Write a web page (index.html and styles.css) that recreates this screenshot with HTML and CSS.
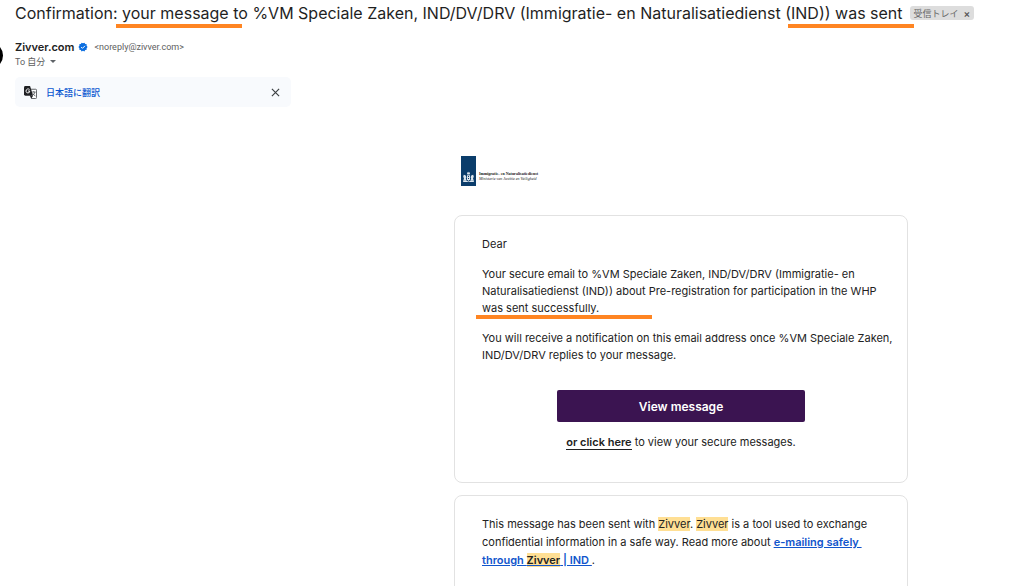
FILE: index.html
```html
<!DOCTYPE html>
<html lang="en">
<head>
    <meta charset="UTF-8">
    <meta name="viewport" content="width=device-width, initial-scale=1.0">
    <title>Confirmation: your message was sent</title>
    <link rel="stylesheet" href="styles.css">
</head>
<body>

    <header class="mail-header">
        <div class="subject">
            <h1>Confirmation<span class="mark mark-start">: your message</span> to %VM Speciale Zaken, IND/DV/DRV (Immigratie- en Naturalisatiedienst <span class="mark mark-end">(IND)) was sent</span></h1>
            <span class="label">受信トレイ <button class="label-close" type="button" aria-label="Remove label">×</button></span>
        </div>

        <div class="sender">
            <span class="avatar"></span>
            <div class="from">
                <strong>Zivver.com</strong>
                <svg class="verified" viewBox="0 0 24 24" aria-hidden="true">
                    <path fill="#0b6ee0" d="M23 12l-2.4-2.8.3-3.7-3.6-.8-1.9-3.2L12 3 8.600 1.500 6.700 4.700 3.100 5.500l.3 3.700L1 12l2.400 2.800-.3 3.700 3.600.8 1.900 3.200L12 21l3.400 1.500 1.900-3.200 3.600-.8-.3-3.700z"/>
                    <path fill="none" stroke="#fff" stroke-width="2.400" d="M7.500 12l3.200 3.200 6-6"/>
                </svg>
                <span class="address">&lt;noreply@zivver.com&gt;</span>
            </div>
            <div class="to">
                To 自分
                <button class="details" type="button" aria-label="Show details">
                    <svg viewBox="0 0 8 4"><path fill="#5f6368" d="M0 0h8L4 4z"/></svg>
                </button>
            </div>
        </div>

        <div class="translate">
            <svg class="translate-icon" viewBox="0 0 14 14" aria-hidden="true">
                <path fill="#fff" stroke="#55585c" d="M5 3.500h7.500q1 0 1 1v8q0 1-1 1H8z"/>
                <path fill="#202124" d="M1.500 0h5l3.300 10.500H1.500Q0 10.500 0 9V1.500Q0 0 1.500 0z"/>
                <path fill="#202124" d="M6.500 10.500h3.300L8 13.500z"/>
                <path fill="none" stroke="#fff" d="M6 3.700Q4.800 2.800 3.500 3.300 2 4 2.200 5.700 2.500 7.500 4.200 7.500 6.300 7.400 6.200 5.400H4.300"/>
                <path fill="none" stroke="#55585c" stroke-width=".9" d="M8.500 6.500h4M10.500 5.500v1M11.800 6.500Q11.300 8.800 9.300 10M9.500 8l2.700 3"/>
            </svg>
            <a href="#" class="translate-link">日本語に翻訳</a>
            <button class="translate-close" type="button" aria-label="Close">
                <svg viewBox="0 0 10 10"><path fill="none" stroke="#3c4043" stroke-width="1.300" d="M1 1l8 8M9 1L1 9"/></svg>
            </button>
        </div>
    </header>

    <main class="mail-body">
        <div class="mail">
            <div class="logo">
                <svg class="logo-flag" viewBox="0 0 15 30" aria-hidden="true">
                    <path fill="#0b3d6b" d="M0 0h15v30H0z"/>
                    <g fill="#dce5ed">
                        <path d="M6 17.500l.5-1.500.6.800.4-1.300.4 1.300.6-.8.5 1.500-.4 1H6.400z"/>
                        <path d="M6 19.200h3v4L7.500 25 6 23.200z"/>
                        <path d="M2.200 20.500l.6-1.700 1.700.4.9 2-.6 1.300.9 2.200H2l1-1.900zM12.800 20.500l-.6-1.700-1.700.4-.9 2 .6 1.300-.9 2.200H13l-1-1.900z"/>
                        <path d="M2 25.200q2.700-.8 5.500.3 2.800-1.100 5.500-.3v.8H2z"/>
                    </g>
                    <path fill="#0b3d6b" d="M7 20h1v1H7zM7 22h1v1H7z"/>
                </svg>
                <div class="logo-text">
                    <strong>Immigratie- en Naturalisatiedienst</strong><br>
                    <em>Ministerie van Justitie en Veiligheid</em>
                </div>
            </div>

            <section class="card">
                <p>Dear</p>
                <p>Your secure email to %VM Speciale Zaken, IND/DV/DRV (Immigratie- en Naturalisatiedienst (IND)) about Pre-registration for participation in the WHP <span class="mark mark-sent">was sent successfully.</span></p>
                <p>You will receive a notification on this email address once %VM Speciale Zaken, IND/DV/DRV replies to your message.</p>
                <button class="view-btn" type="button">View message</button>
                <p class="alt"><a href="#">or click here</a> to view your secure messages.</p>
            </section>

            <section class="card card-info">
                <p>This message has been sent with <mark>Zivver</mark>. <mark>Zivver</mark> is a tool used to exchange confidential information in a safe way. Read more about <a href="#">e-mailing safely&nbsp; through <mark>Zivver</mark> | IND&nbsp;</a>.</p>
            </section>
        </div>
    </main>

</body>
</html>
```
FILE: styles.css
```css
body {
    margin: 0;
    height: 100vh;
    overflow: hidden;
    background-color: #fff;
    color: #222;
    font-family: Inter, "Noto Sans CJK JP", sans-serif;
    font-size: 11px;
}

button {
    padding: 0;
    border: none;
    background: none;
    font-family: inherit;
    cursor: pointer;
}

svg {
    display: block;
}

.mail-header {
    padding: 2px 15px 0;
}

/* Subject */
.subject {
    display: flex;
    align-items: center;
    gap: 7px;
    height: 22px;
    white-space: nowrap;
}

h1 {
    margin: 0;
    color: #1f1f1f;
    font-size: 16px;
    font-weight: 400;
    line-height: 22px;
}

.label {
    display: flex;
    align-items: center;
    gap: 5px;
    height: 14px;
    padding: 0 4px;
    border-radius: 3px;
    background-color: #ddd;
    color: #666;
    font-size: 9px;
}

.label-close {
    color: #555;
    font-size: 10px;
    font-weight: 600;
}

/* Orange highlight lines */
.mark {
    position: relative;
}

.mark::after {
    content: "";
    position: absolute;
    left: 3px;
    bottom: -5px;
    width: 126px;
    height: 4px;
    background-color: #ff8522;
}

.mark-sent::after {
    left: -6px;
    bottom: -4px;
    width: 176px;
}

/* Sender */
.sender {
    position: relative;
    margin-top: 15px;
}

.avatar {
    position: absolute;
    top: 3px;
    left: -39px;
    width: 27px;
    height: 27px;
    border-radius: 50%;
    background-color: #000;
}

.from,
.to {
    display: flex;
    align-items: center;
    height: 15px;
}

.from strong {
    font-weight: 600;
}

.verified {
    width: 10px;
    height: 10px;
    margin: 0 6px 0 4px;
}

.address,
.to {
    color: #5e5e5e;
    font-family: Roboto, "Noto Sans CJK JP", sans-serif;
    font-size: 9px;
}

.details {
    margin-left: 5px;
}

.details svg {
    width: 6px;
    height: 3px;
}

/* Translate bar */
.translate {
    display: flex;
    align-items: center;
    box-sizing: border-box;
    max-width: 276px;
    height: 30px;
    margin-top: 8px;
    padding: 0 11px 0 9px;
    border-radius: 5px;
    background-color: #f8fafd;
}

.translate-icon {
    width: 13px;
    height: 13px;
}

.translate-link {
    flex: 1;
    margin-left: 9px;
    color: #0b57d0;
    font-size: 9px;
    font-weight: 500;
    text-decoration: none;
}

.translate-close svg {
    width: 9px;
    height: 9px;
}

/* Message */
.mail-body {
    padding: 49px 0 0 338px;
}

.mail {
    max-width: 454px;
    margin: 0 auto;
}

.logo {
    display: flex;
    align-items: center;
    gap: 3px;
    margin: 0 0 29px 7px;
}

.logo-flag {
    width: 15px;
    height: 30px;
}

.logo-text {
    padding-top: 10px;
    color: #222;
    font-family: "Liberation Serif", serif;
    font-size: 4px;
    line-height: 5px;
}

.card {
    padding: 20px 12px 31px;
    border: 1px solid #e2e2e2;
    border-radius: 8px;
    line-height: 17px;
}

.card p {
    margin: 0 0 13px;
    padding-left: 15px;
}

.view-btn {
    display: block;
    width: 248px;
    height: 32px;
    margin: 26px auto 12px;
    border-radius: 2px;
    background-color: #3b1451;
    color: #fff;
    font-size: 12px;
    font-weight: 600;
}

.card .alt {
    margin: 0;
    padding: 0;
    text-align: center;
}

.alt a {
    border-bottom: 1px solid #222;
    color: #222;
    font-weight: 600;
    text-decoration: none;
}

.card-info {
    margin-top: 12px;
    padding-top: 19px;
    line-height: 18px;
}

.card-info a {
    color: #1155cc;
    font-weight: 600;
}

mark {
    background-color: #ffdf94;
    color: #222;
}
```
